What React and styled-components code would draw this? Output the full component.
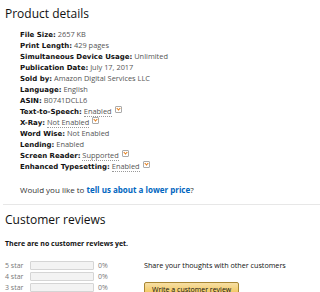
import styled, { createGlobalStyle } from "styled-components";

const GlobalStyle = createGlobalStyle`
  body {
    margin: 0;
    background: #fff;
    font-family: "Open Sans", "Noto Sans", sans-serif;
    color: #111;
  }
`;

const Page = styled.div`
  width: 320px;
  height: 292px;
  overflow: hidden;
  padding: 5px 0 0 5px;
  box-sizing: border-box;
`;

const Heading = styled.h2`
  margin: 0;
  font-size: 12px;
  font-weight: 400;
  line-height: 18px;
  color: #111;
`;

const DetailList = styled.ul`
  list-style: none;
  margin: 6px 0 0 15px;
  padding: 0;
`;

const Item = styled.li`
  font-size: 7.4px;
  line-height: 11px;
  height: 11px;
  white-space: nowrap;
  color: #555;
`;

const Label = styled.span`
  font-family: "DejaVu Sans", sans-serif;
  font-stretch: normal;
  font-size: 7px;
  font-weight: 700;
  color: #111;
`;

const Dotted = styled.span`
  border-bottom: 1px dotted #999;
`;

const Pop = styled.span`
  display: inline-block;
  width: 5px;
  height: 5px;
  margin-left: 3px;
  vertical-align: 1px;
  border: 1px solid #aaa;
  border-radius: 1px;
  position: relative;
  &::after {
    content: "";
    position: absolute;
    left: 1px;
    top: 0px;
    width: 2px;
    height: 2px;
    border-right: 1px solid #e47911;
    border-bottom: 1px solid #e47911;
    transform: rotate(45deg);
  }
`;

const Ask = styled.p`
  margin: 12px 0 0 15px;
  font-size: 8px;
  color: #333;
  line-height: 11px;
`;

const Link = styled.a`
  color: #0066c0;
  font-weight: 700;
  text-decoration: none;
`;

const Divider = styled.hr`
  border: 0;
  border-top: 1px solid #e7e7e7;
  margin: 9px 0 0 -2px;
`;

const ReviewHeading = styled(Heading)`
  margin-top: 6px;
`;

const NoReviews = styled.p`
  margin: 9px 0 0;
  font-size: 7px;
  font-weight: 700;
  line-height: 11px;
  color: #111;
`;

const Reviews = styled.div`
  display: flex;
  margin-top: 11px;
`;

const Histogram = styled.div`
  width: 139px;
`;

const StarRow = styled.div`
  display: flex;
  align-items: center;
  height: 11px;
  font-size: 7px;
  color: #777;
`;

const StarLabel = styled.span`
  width: 25px;
`;

const Bar = styled.div`
  width: 62px;
  height: 7px;
  background: #f3f3f3;
  border: 1px solid #d5d5d5;
  border-radius: 1px;
  margin-right: 4px;
`;

const Share = styled.div`
  display: flex;
  flex-direction: column;
  align-items: flex-start;
  font-size: 7.2px;
  line-height: 11px;
  color: #111;
`;

const Button = styled.button`
  margin-top: 11px;
  padding: 2px 7px;
  font-family: inherit;
  font-size: 7px;
  color: #111;
  background: linear-gradient(#f7dfa5, #f0c14b);
  border: 1px solid #a88734;
  border-radius: 2px;
`;

const details = [
  ["File Size:", "2657 KB"],
  ["Print Length:", "429 pages"],
  ["Simultaneous Device Usage:", "Unlimited"],
  ["Publication Date:", "July 17, 2017"],
  ["Sold by:", "Amazon Digital Services LLC"],
  ["Language:", "English"],
  ["ASIN:", "B0741DCLL6"],
  ["Text-to-Speech:", "Enabled", true],
  ["X-Ray:", "Not Enabled", true],
  ["Word Wise:", "Not Enabled"],
  ["Lending:", "Enabled"],
  ["Screen Reader:", "Supported", true],
  ["Enhanced Typesetting:", "Enabled", true],
];

export default function App() {
  return (
    <Page>
      <GlobalStyle />
      <Heading>Product details</Heading>
      <DetailList>
        {details.map(([label, value, pop]) => (
          <Item key={label}>
            <Label>{label}</Label>{" "}
            {pop ? (
              <>
                <Dotted>{value}</Dotted>
                <Pop />
              </>
            ) : (
              value
            )}
          </Item>
        ))}
      </DetailList>
      <Ask>
        Would you like to <Link href="#">tell us about a lower price</Link>?
      </Ask>
      <Divider />
      <ReviewHeading>Customer reviews</ReviewHeading>
      <NoReviews>There are no customer reviews yet.</NoReviews>
      <Reviews>
        <Histogram>
          {[5, 4, 3].map((n) => (
            <StarRow key={n}>
              <StarLabel>{n} star</StarLabel>
              <Bar />
              0%
            </StarRow>
          ))}
        </Histogram>
        <Share>
          Share your thoughts with other customers
          <Button>Write a customer review</Button>
        </Share>
      </Reviews>
    </Page>
  );
}
